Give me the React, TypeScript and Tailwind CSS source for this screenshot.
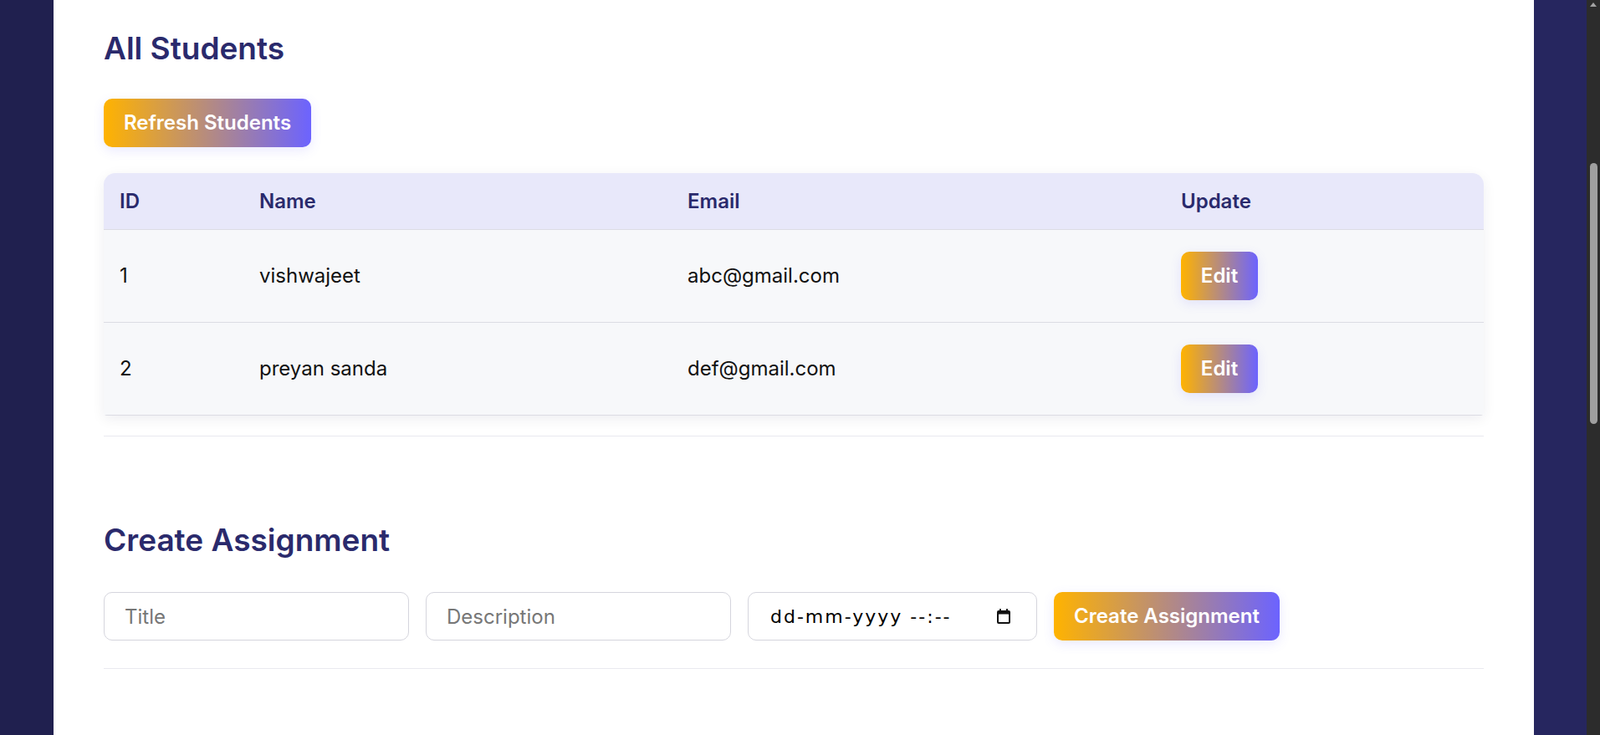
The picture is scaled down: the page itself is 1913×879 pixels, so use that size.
import React from "react";

const students = [
  { id: 1, name: "vishwajeet", email: "abc@gmail.com" },
  { id: 2, name: "preyan sanda", email: "def@gmail.com" },
];

const gradBtn =
  "bg-[linear-gradient(90deg,#ffb300,#6c63ff)] text-white font-semibold rounded-[10px] shadow-[0_4px_14px_rgba(108,99,255,0.14)]";

function CalendarIcon() {
  return (
    <svg width="20" height="20" viewBox="0 0 20 20" aria-hidden="true">
      <rect x="5" y="1" width="2" height="3" rx="0.6" fill="#111" />
      <rect x="13" y="1" width="2" height="3" rx="0.6" fill="#111" />
      <rect x="2" y="3" width="16" height="16" rx="2" fill="#111" />
      <rect x="4" y="7.5" width="12" height="9.5" rx="0.5" fill="#fff" />
    </svg>
  );
}

export default function App() {
  return (
    <div className="flex h-[879px] w-full overflow-hidden bg-[#24245c] font-[Inter,sans-serif]">
      <div className="w-[64px] shrink-0 bg-[#20204f]" />
      <main className="w-[1770px] shrink-0 bg-white px-[60px] pt-[36px]">
        <section className="border-b border-[#e9e9ef] pb-[24px]">
          <h2 className="text-[37px] leading-[44px] font-semibold text-[#2a2a6c]">All Students</h2>
          <button className={`${gradBtn} mt-[38px] h-[58px] px-6 text-[24px]`}>Refresh Students</button>
          <div className="mt-[31px] rounded-t-[14px] rounded-b-[4px] overflow-hidden shadow-[0_4px_16px_rgba(20,20,60,0.07)]">
            <div className="grid grid-cols-[166px_512px_590px_382px] h-[68px] items-center bg-[#e8e8fa] border-b border-[#dcdce4] text-[24px] font-semibold text-[#2a2a6c]">
              <div className="pl-[19px]">ID</div>
              <div className="pl-[20px]">Name</div>
              <div className="pl-[20px]">Email</div>
              <div className="pl-[20px]">Update</div>
            </div>
            {students.map((s) => (
              <div
                key={s.id}
                className="grid grid-cols-[166px_512px_590px_382px] h-[111px] items-center bg-[#f7f8fa] border-b border-[#dcdce4] text-[24px] text-[#111]"
              >
                <div className="pl-[19px]">{s.id}</div>
                <div className="pl-[20px]">{s.name}</div>
                <div className="pl-[20px]">{s.email}</div>
                <div className="pl-[20px]">
                  <button className={`${gradBtn} h-[58px] w-[92px] text-[24px]`}>Edit</button>
                </div>
              </div>
            ))}
          </div>
        </section>

        <section className="mt-[102px] border-b border-[#e9e9ef] pb-[33px]">
          <h2 className="text-[37px] leading-[44px] font-semibold text-[#2a2a6c]">Create Assignment</h2>
          <div className="mt-[40px] flex items-center gap-5">
            <input
              placeholder="Title"
              className="h-[58px] w-[365px] rounded-[10px] border border-[#d5d5dd] px-6 text-[24px] outline-none placeholder:text-[#777]"
            />
            <input
              placeholder="Description"
              className="h-[58px] w-[365px] rounded-[10px] border border-[#d5d5dd] px-6 text-[24px] outline-none placeholder:text-[#777]"
            />
            <div className="flex h-[58px] w-[346px] items-center justify-between rounded-[10px] border border-[#d5d5dd] pl-[26px] pr-[29px]">
              <span className="font-['DejaVu_Sans',sans-serif] text-[22px] tracking-[2px] text-black">dd-mm-yyyy --:--</span>
              <CalendarIcon />
            </div>
            <button className={`${gradBtn} h-[58px] px-6 text-[24px]`}>Create Assignment</button>
          </div>
        </section>
      </main>
      <div className="w-[63px] shrink-0 bg-[#26265f]" />
      <div className="flex w-[16px] shrink-0 flex-col items-center bg-[#2c2c2c]">
        <div className="mt-[3px] h-0 w-0 border-x-[4px] border-b-[5px] border-x-transparent border-b-[#a3a3a3]" />
        <div className="mt-[187px] h-[312px] w-[9px] rounded-full bg-[#9f9f9f]" />
      </div>
    </div>
  );
}
